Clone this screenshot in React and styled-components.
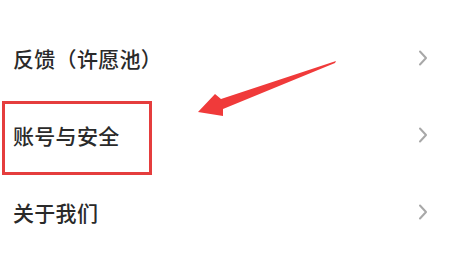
import React from "react";
import styled, { createGlobalStyle } from "styled-components";

const Global = createGlobalStyle`
  html, body { margin: 0; padding: 0; background: #fff; }
  body { font-family: "Noto Sans CJK SC", "Noto Sans", sans-serif; }
`;

const Page = styled.div`
  position: relative;
  width: 451px;
  height: 253px;
  overflow: hidden;
  background: #fff;
  padding-top: 19px;
  box-sizing: border-box;
`;

const List = styled.div`
  display: flex;
  flex-direction: column;
`;

const Row = styled.div`
  display: flex;
  align-items: center;
  justify-content: space-between;
  height: 77px;
  padding: 0 23px 0 13px;
`;

const Label = styled.span`
  font-size: 21px;
  font-weight: 500;
  color: #2a2a2a;
  letter-spacing: 0.3px;
`;

const Chevron = styled.svg`
  width: 10px;
  height: 16px;
  flex: none;
`;

const Highlight = styled.div`
  position: absolute;
  left: 2px;
  top: 101px;
  width: 150px;
  height: 74px;
  border: 3px solid #e53d3d;
  box-sizing: border-box;
`;

const Arrow = styled.svg`
  position: absolute;
  left: 190px;
  top: 55px;
  width: 150px;
  height: 65px;
`;

const items = ["反馈（许愿池）", "账号与安全", "关于我们"];

export default function App() {
  return (
    <Page>
      <Global />
      <List>
        {items.map((t) => (
          <Row key={t}>
            <Label>{t}</Label>
            <Chevron viewBox="0 0 10 16">
              <path d="M2 1.5 L8 8 L2 14.5" fill="none" stroke="#a8a8a8" strokeWidth="2" strokeLinecap="round" strokeLinejoin="round" />
            </Chevron>
          </Row>
        ))}
      </List>
      <Highlight />
      <Arrow viewBox="0 0 150 65">
        <polygon points="146,6 31,44 25,39 8,57 33,61 33,54 145,8" fill="#f03a3a" />
      </Arrow>
    </Page>
  );
}
